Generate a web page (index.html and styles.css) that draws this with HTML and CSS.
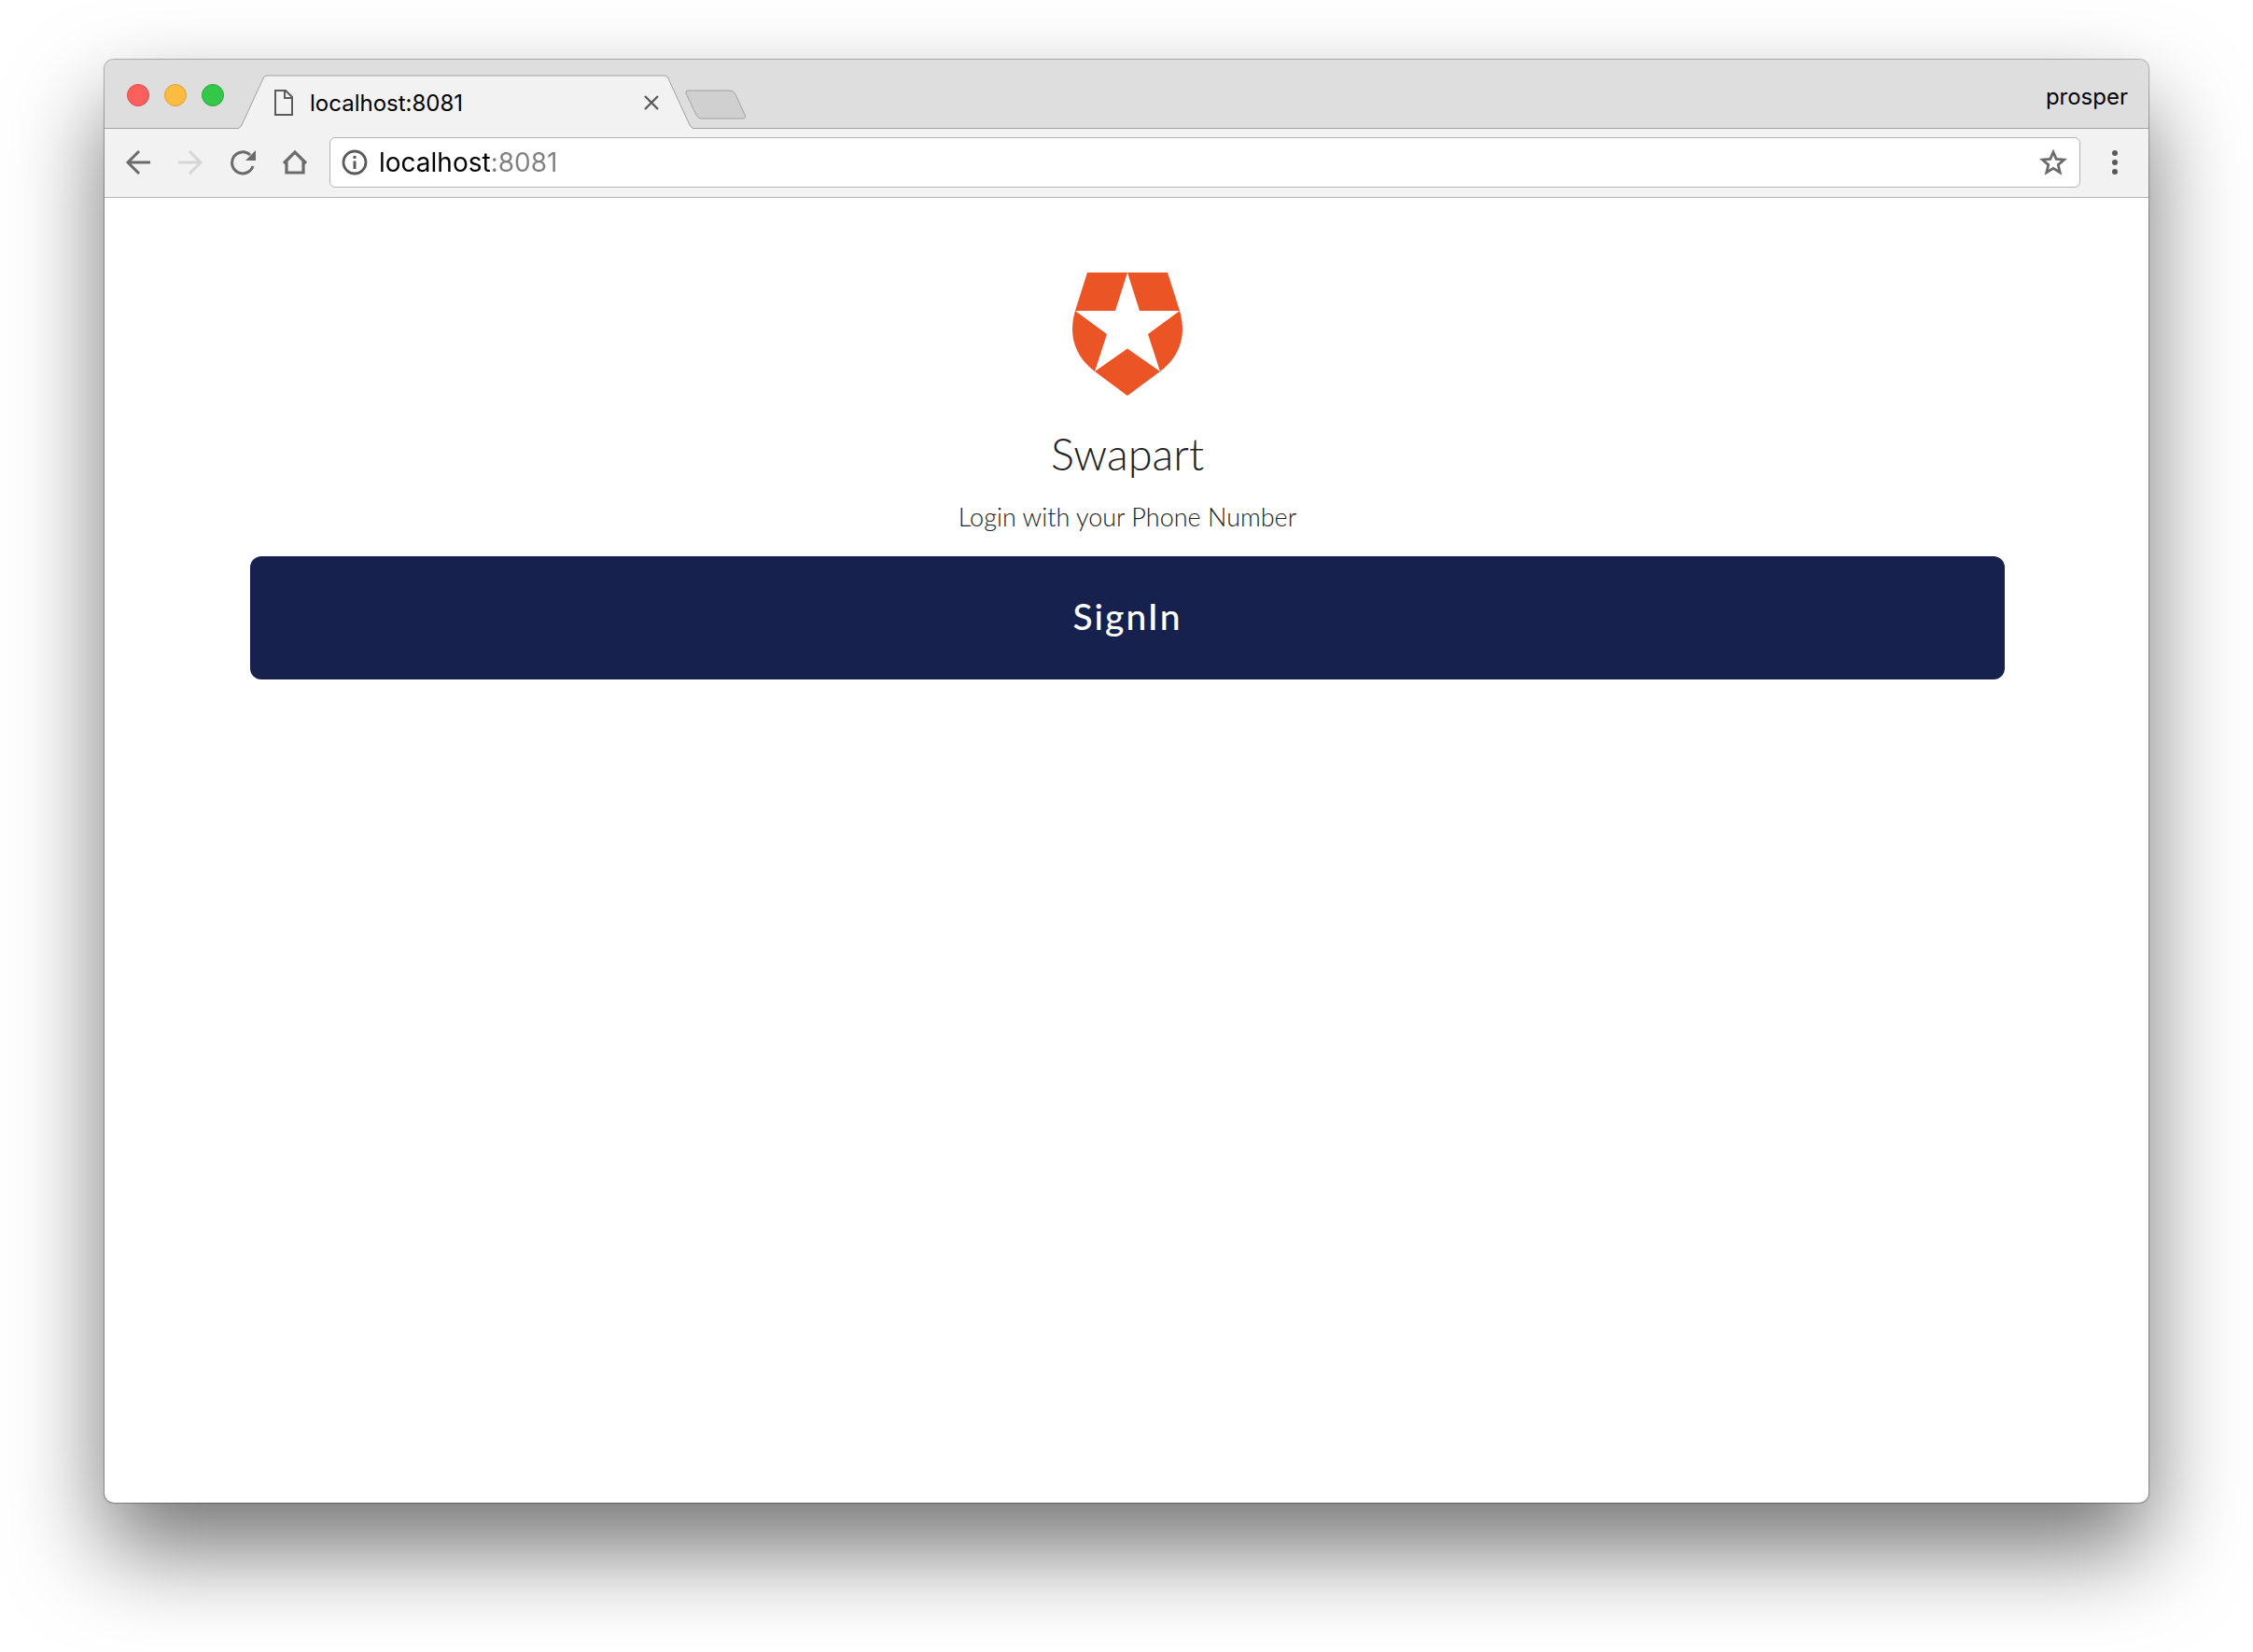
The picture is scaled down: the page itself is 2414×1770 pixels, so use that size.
FILE: index.html
```html
<!DOCTYPE html>
<html lang="en">
<head>
    <meta charset="UTF-8">
    <meta name="viewport" content="width=device-width, initial-scale=1.0">
    <title>Swapart</title>
    <link rel="stylesheet" href="styles.css">
</head>
<body>

    <div class="window">
        <header class="tab-strip">
            <div class="lights">
                <button class="light red" aria-label="Close window"></button>
                <button class="light yellow" aria-label="Minimize window"></button>
                <button class="light green" aria-label="Zoom window"></button>
            </div>
            <div class="tab">
                <svg class="tab-shape" width="486" height="58" viewBox="0 0 486 58">
                    <path d="M0 58V57Q2 57 3 54L26 4Q27 1 30 1H456Q459 1 460 4L483 54Q484 57 486 57V58Z" fill="#f2f2f2"/>
                    <path d="M0 56.500Q2 56.500 3 54L26 4Q27 1 30 1H456Q459 1 460 4L483 54Q484 56.500 486 56.500" fill="none" stroke="#a0a0a0"/>
                </svg>
                <svg class="page-icon" width="20" height="28" viewBox="0 0 20 28" fill="none" stroke="#5a5a5a" stroke-width="2">
                    <path d="M1 1H12L19 8V27H1Z"/>
                    <path d="M11 1V9H19"/>
                </svg>
                <span class="tab-title">localhost:8081</span>
                <button class="tab-close" aria-label="Close tab">
                    <svg width="16" height="16" viewBox="0 0 16 16" stroke="#5a5a5a" stroke-width="2.400"><path d="M1 1L15 15M15 1L1 15"/></svg>
                </button>
            </div>
            <button class="new-tab" aria-label="New tab">
                <svg width="66" height="32" viewBox="0 0 66 32"><path d="M3 1H48Q52 1 54 5L64 27Q66 31 62 31H17Q14 31 12 27L1 4Q0 1 3 1Z" fill="#d0d0d0" stroke="#a2a2a2"/></svg>
            </button>
            <button class="profile">prosper</button>
        </header>

        <nav class="toolbar">
            <button class="tool" aria-label="Back">
                <svg width="28" height="28" viewBox="0 0 28 28" fill="none" stroke="#6b6b6b" stroke-width="3"><path d="M27 14H3M15 2L3 14L15 26"/></svg>
            </button>
            <button class="tool" aria-label="Forward" disabled>
                <svg width="28" height="28" viewBox="0 0 28 28" fill="none" stroke="#d6d6d6" stroke-width="3"><path d="M1 14H25M13 2L25 14L13 26"/></svg>
            </button>
            <button class="tool" aria-label="Reload">
                <svg width="28" height="28" viewBox="0 0 28 28"><path d="M25 18A11.500 11.500 0 1 1 22 6" fill="none" stroke="#6b6b6b" stroke-width="3"/><path d="M28 1V12H17Z" fill="#6b6b6b"/></svg>
            </button>
            <button class="tool" aria-label="Home">
                <svg width="28" height="28" viewBox="0 0 28 28" fill="none" stroke="#6b6b6b" stroke-width="3.200"><path d="M2 15L14 3L26 15M5 13V25H23V13"/></svg>
            </button>
            <div class="address-bar">
                <svg width="28" height="28" viewBox="0 0 28 28"><circle cx="14" cy="14" r="12" fill="none" stroke="#5a5a5a" stroke-width="2.800"/><path d="M14 7V10M14 12.500V21" stroke="#5a5a5a" stroke-width="3"/></svg>
                <input class="address" type="text" value="localhost:8081" aria-label="Address">
                <button class="bookmark" aria-label="Bookmark this page">
                    <svg width="30" height="30" viewBox="0 0 30 30" fill="none" stroke="#6b6b6b" stroke-width="2.800"><path d="M15 4L18.200 11.500L26.500 12.200L20.200 17.600L22.200 25.800L15 21.400L7.800 25.800L9.800 17.600L3.500 12.200L11.800 11.500Z"/></svg>
                </button>
            </div>
            <button class="menu" aria-label="Menu">
                <svg width="6" height="26" viewBox="0 0 6 26" fill="#5a5a5a"><circle cx="3" cy="3" r="3"/><circle cx="3" cy="13" r="3"/><circle cx="3" cy="23" r="3"/></svg>
            </button>
        </nav>

        <main class="page">
            <svg class="logo" width="118" height="132" viewBox="0 0 118 132">
                <path d="M16 0H102L115 41C124 72 111 93 94 106L59 132L24 106C7 93 -6 72 3 41Z" fill="#eb5424"/>
                <path d="M59 0L72 41H115L81 66L94 106L59 81.500L24 106L37 66L3 41H46Z" fill="#fff"/>
            </svg>
            <h1>Swapart</h1>
            <p>Login with your Phone Number</p>
            <button class="sign-in">SignIn</button>
        </main>
    </div>

</body>
</html>
```
FILE: styles.css
```css
* {
    box-sizing: border-box;
}

body {
    margin: 0;
    min-height: 100vh;
    display: flex;
    padding: 64px 112px 160px;
    background: #fff;
    font-family: Inter, "Liberation Sans", sans-serif;
    color: #222;
}

button {
    padding: 0;
    border: none;
    background: none;
    font: inherit;
    color: inherit;
    cursor: pointer;
}

svg {
    display: block;
}

.window {
    flex: 1;
    display: flex;
    flex-direction: column;
    border-radius: 10px;
    background: #fff;
    box-shadow: 0 0 1px 1px rgba(0, 0, 0, 0.3), 0 50px 100px rgba(0, 0, 0, 0.55);
}

.tab-strip {
    display: flex;
    height: 74px;
    background: #dedede;
    border-bottom: 1px solid #a0a0a0;
    border-radius: 10px 10px 0 0;
}

.lights {
    display: flex;
    gap: 16px;
    padding: 26px 26px 0 24px;
}

.light {
    width: 24px;
    height: 24px;
    border-radius: 50%;
    border: 1px solid;
}

.red {
    background: #fc605c;
    border-color: #e04844;
}

.yellow {
    background: #fdbc40;
    border-color: #de9f34;
}

.green {
    background: #34c84a;
    border-color: #27aa35;
}

.tab {
    position: relative;
    display: flex;
    align-items: center;
    width: 486px;
    height: 58px;
    margin: 16px 0 -2px -10px;
    padding: 2px 36px 0 38px;
}

.tab-shape {
    position: absolute;
    top: 0;
    left: 0;
}

.page-icon,
.tab-title,
.tab-close {
    position: relative;
}

.tab-title {
    flex: 1;
    margin-left: 18px;
    font-size: 24px;
    color: #000;
}

.new-tab {
    align-self: flex-start;
    margin-top: 32px;
    margin-left: -8px;
}

.profile {
    margin-left: auto;
    padding: 6px 22px 0 0;
    font-size: 24px;
    color: #000;
}

.toolbar {
    display: flex;
    align-items: center;
    gap: 28px;
    height: 74px;
    padding: 0 33px 2px 22px;
    background: #f2f2f2;
    border-bottom: 1px solid #b4b4b4;
}

.address-bar {
    flex: 1;
    display: flex;
    align-items: center;
    gap: 12px;
    height: 54px;
    margin: 0 6px 0 -5px;
    padding: 0 13px 0 12px;
    background: #fff;
    border: 1px solid #b4b4b4;
    border-radius: 6px;
}

/* host in black, port in grey */
.address {
    flex: 1;
    min-width: 0;
    padding: 0;
    border: none;
    outline: none;
    font: inherit;
    font-size: 28px;
    background: linear-gradient(to right, #000 119px, #808080 119px);
    -webkit-background-clip: text;
    background-clip: text;
    -webkit-text-fill-color: transparent;
}

.page {
    display: flex;
    flex-direction: column;
    align-items: center;
    padding: 80px 154px 80px 156px;
    font-family: Lato, sans-serif;
    font-weight: 300;
}

h1 {
    margin: 34px 0 0;
    font-size: 47px;
    line-height: 56px;
    font-weight: 300;
}

p {
    margin: 20px 0 22px;
    font-size: 27px;
    line-height: 40px;
}

.sign-in {
    width: 100%;
    height: 132px;
    padding-bottom: 4px;
    border-radius: 12px;
    background: #16214d;
    color: #fff;
    font-size: 39px;
    font-weight: 500;
    letter-spacing: 2px;
}
```
